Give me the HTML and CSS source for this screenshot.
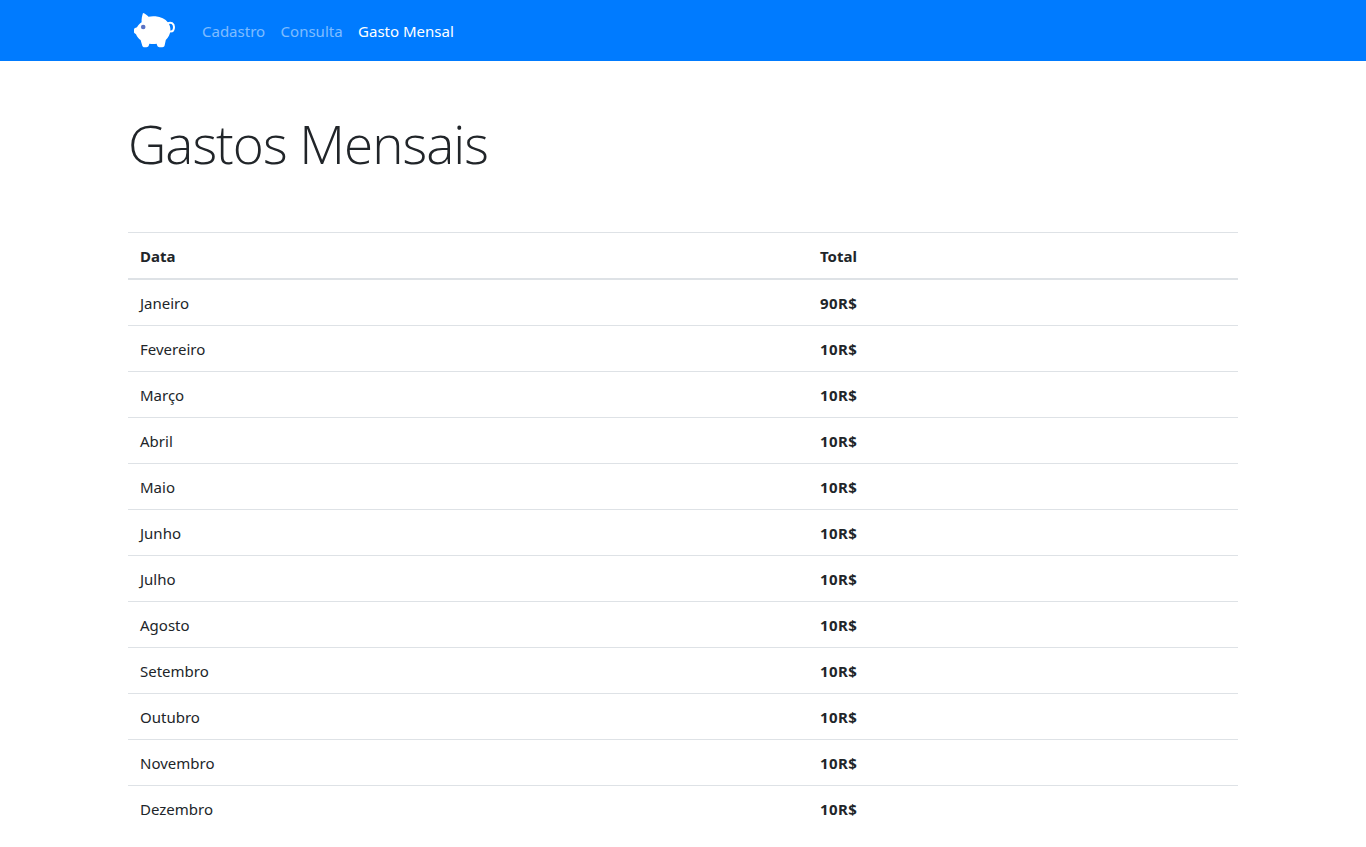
FILE: index.html
```html
<!DOCTYPE html>
<html lang="pt-BR">
<head>
<meta charset="utf-8">
<title>Gastos Mensais</title>
<link rel="stylesheet" href="styles.css">
</head>
<body>
<nav class="navbar">
  <div class="container nav-inner">
    <a class="brand" href="#" aria-label="Início">
      <svg class="pig" width="42" height="38" viewBox="0 0 42 38">
        <path class="pig-body" d="M9 2 C11 2.6 13 4.2 14.5 5.8 C16.5 5.2 19 5 21.5 5.3 C26.8 5.8 31.4 8 34 11.5 C35.8 13.9 36.6 16.5 36.4 19.5 C36.1 23.5 34.4 26.6 31.8 29 L30.6 34.5 C30.4 35.6 29.5 36.2 28.4 36.2 L25.5 36.2 C24.4 36.2 23.6 35.6 23.2 34.6 L22.6 32.8 C20.6 33.2 18 33.2 15.4 32.8 L14.8 34.6 C14.4 35.6 13.6 36.2 12.5 36.2 L10.5 36.2 C9.3 36.2 8.5 35.5 8.2 34.4 L6.6 29 C4.6 27.6 3 25.6 2 23.2 L1 22.6 C0.3 22.3 0 21.8 0 21.2 L0 18.6 C0 17.9 0.4 17.4 1.1 17.1 L3 16.2 C4.2 14.2 5.6 12.6 7.6 11.2 C7.4 8.2 8 5 9 2 Z"/>
        <circle class="pig-eye" cx="9.2" cy="16" r="2.3"/>
        <path class="pig-tail" d="M34 12.2 C36.8 10.8 40 12.4 40 16 C40 18.8 38.6 20.6 36.6 20.6"/>
      </svg>
    </a>
    <ul class="nav-links">
      <li><a href="#" class="nav-link">Cadastro</a></li>
      <li><a href="#" class="nav-link">Consulta</a></li>
      <li><a href="#" class="nav-link active">Gasto Mensal</a></li>
    </ul>
  </div>
</nav>
<main class="container">
  <h1 class="title">Gastos Mensais</h1>
  <table class="table">
    <colgroup><col class="col-data"><col class="col-total"></colgroup>
    <thead><tr><th>Data</th><th>Total</th></tr></thead>
    <tbody>
      <tr><td>Janeiro</td><td class="value">90R$</td></tr>
      <tr><td>Fevereiro</td><td class="value">10R$</td></tr>
      <tr><td>Março</td><td class="value">10R$</td></tr>
      <tr><td>Abril</td><td class="value">10R$</td></tr>
      <tr><td>Maio</td><td class="value">10R$</td></tr>
      <tr><td>Junho</td><td class="value">10R$</td></tr>
      <tr><td>Julho</td><td class="value">10R$</td></tr>
      <tr><td>Agosto</td><td class="value">10R$</td></tr>
      <tr><td>Setembro</td><td class="value">10R$</td></tr>
      <tr><td>Outubro</td><td class="value">10R$</td></tr>
      <tr><td>Novembro</td><td class="value">10R$</td></tr>
      <tr><td>Dezembro</td><td class="value">10R$</td></tr>
    </tbody>
  </table>
</main>
</body>
</html>
```
FILE: styles.css
```css
* { box-sizing: border-box; }
html, body { margin: 0; padding: 0; }
body {
  font-family: "Noto Sans", "Open Sans", "Liberation Sans", sans-serif;
  font-size: 15px;
  line-height: 21px;
  color: #212529;
  background: #fff;
}
.container {
  width: 1140px;
  margin: 0 auto;
  padding: 0 15px;
}
.navbar {
  height: 61px;
  background: #007bff;
}
.nav-inner {
  display: flex;
  align-items: center;
  height: 100%;
}
.brand {
  display: block;
  height: 38px;
  margin-left: 6px;
  margin-right: 26px;
  margin-top: -1px;
}
.pig { display: block; }
.pig-body { fill: #fff; }
.pig-eye { fill: #5b74c6; }
.pig-tail { fill: none; stroke: #fff; stroke-width: 2; stroke-linecap: round; }
.nav-links {
  display: flex;
  list-style: none;
  margin: 0;
  padding: 2px 0 0;
  gap: 15.5px;
}
.nav-link {
  color: rgba(255, 255, 255, .5);
  text-decoration: none;
}
.nav-link.active { color: #fff; }
.title {
  margin: 0;
  padding-top: 45px;
  height: 171px;
  font-size: 53px;
  line-height: 75px;
  letter-spacing: -1px;
  font-weight: 300;
  font-family: "Open Sans", "Noto Sans", sans-serif;
}
.table {
  width: 1110px;
  border-collapse: collapse;
  table-layout: fixed;
}
.col-data { width: 680px; }
.col-total { width: 430px; }
th, td {
  padding: 13px 12px 11px;
  text-align: left;
  border-top: 1px solid #dee2e6;
  height: 46px;
  font-weight: 400;
}
th {
  font-weight: 700;
  border-bottom: 2px solid #dee2e6;
}
tbody tr:first-child td { border-top: 0; height: 45px; }
.value { font-weight: 700; letter-spacing: .4px; }
```
